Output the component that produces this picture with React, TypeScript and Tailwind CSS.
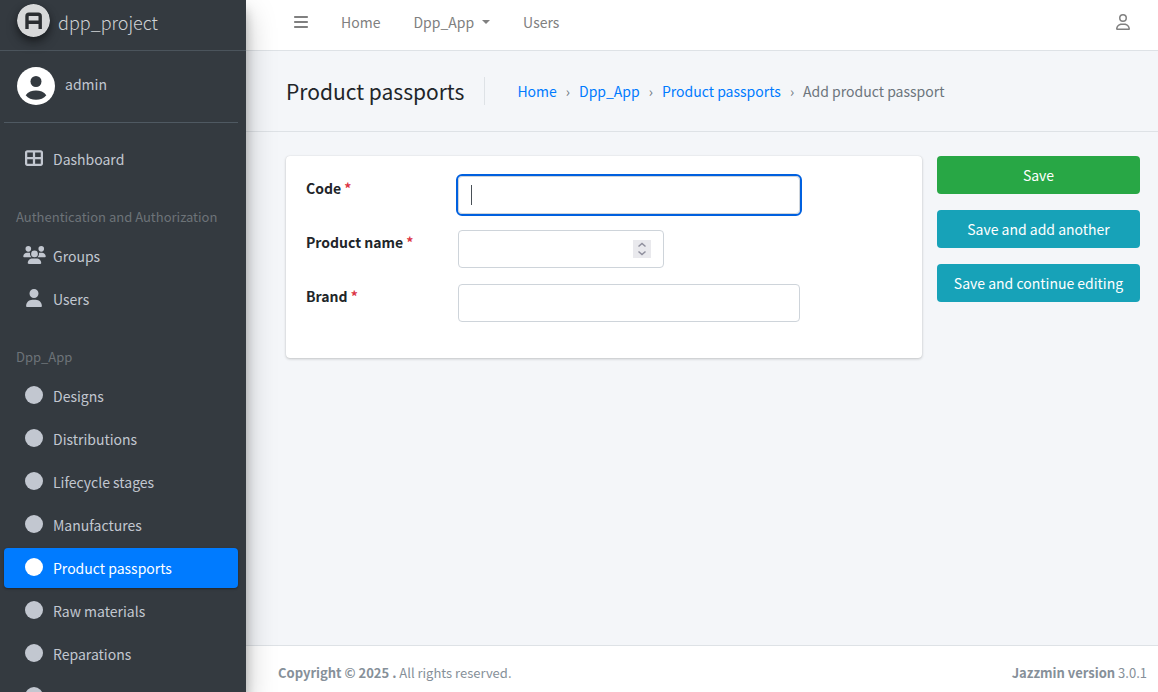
import type { ReactNode } from "react";
import { FaBars, FaCircle, FaRegUser, FaTableCellsLarge, FaUser, FaUsers } from "react-icons/fa6";

type NavItemProps = { label?: string; icon?: ReactNode; active?: boolean };

function NavItem({ label, icon, active }: NavItemProps) {
  return (
    <li>
      <a
        href="#"
        aria-label={label ?? "More"}
        aria-current={active ? "page" : undefined}
        className={
          active
            ? "flex h-10 items-center rounded bg-[#007bff] pl-4 text-white shadow-[0_1px_3px_rgba(0,0,0,0.12),0_1px_2px_rgba(0,0,0,0.24)]"
            : "flex h-10 items-center rounded pl-4 text-[#c2c7d0]"
        }
      >
        <span className="mr-[5px] flex w-7 justify-center pb-[2px] text-[18px]">{icon ?? <FaCircle />}</span>
        <span>{label}</span>
      </a>
    </li>
  );
}

function NavHeader({ children }: { children: ReactNode }) {
  return <h2 className="px-3 pt-[26px] pb-[3px] text-[13px] leading-6 text-[#6d7378]">{children}</h2>;
}

function Logo() {
  return (
    <svg viewBox="0 0 33 33" className="size-[33px] rounded-full shadow-[0_3px_6px_rgba(0,0,0,0.3),0_6px_12px_rgba(0,0,0,0.3)]" aria-hidden="true">
      <circle cx="16.5" cy="16.5" r="16.5" fill="#d7d8d9" />
      <path d="M10 25V12.2Q10 10.2 12 10.2H21.2Q23.2 10.2 23.2 12.2V25M10 18.2H23.2" fill="none" stroke="#2b2e31" strokeWidth="3.4" />
    </svg>
  );
}

function Avatar() {
  return (
    <svg viewBox="0 0 38 38" className="size-[38px]" aria-hidden="true">
      <circle cx="19" cy="19" r="19" fill="#fff" />
      <circle cx="19" cy="14.5" r="5.5" fill="#343a40" />
      <path d="M8.700 28.300C11 25 15 23.600 19 23.600S27 25 29.300 28.300C27 31.300 23 32.800 19 32.800S11 31.300 8.700 28.300Z" fill="#343a40" />
    </svg>
  );
}

function Sidebar() {
  return (
    <aside className="sticky top-0 z-10 h-screen w-[246px] shrink-0 overflow-hidden bg-[#343a40] shadow-[0_14px_28px_rgba(0,0,0,0.25),0_10px_10px_rgba(0,0,0,0.22)]">
      <a href="#" className="flex h-[51px] items-start gap-2 border-b border-[#4b545c] pt-1 pl-[17px] text-[#cfd2d5]">
        <Logo />
        <span className="pt-[3px] text-[18px] leading-[30px] font-light">dpp_project</span>
      </a>
      <div className="px-1 pr-2">
        <div className="flex h-[72px] items-center gap-[10px] border-b border-[#4f5962] pb-[2px] pl-[13px]">
          <Avatar />
          <a href="#" className="pb-1 text-[#c2c7d0]">admin</a>
        </div>
        <nav className="pt-4">
          <ul className="flex flex-col gap-[3px]">
            <NavItem label="Dashboard" icon={<FaTableCellsLarge />} />
          </ul>
          <NavHeader>Authentication and Authorization</NavHeader>
          <ul className="flex flex-col gap-[3px] pt-1">
            <NavItem label="Groups" icon={<FaUsers className="w-[23px]" />} />
            <NavItem label="Users" icon={<FaUser />} />
          </ul>
          <NavHeader>Dpp_App</NavHeader>
          <ul className="flex flex-col gap-[3px] pt-1">
            <NavItem label="Designs" />
            <NavItem label="Distributions" />
            <NavItem label="Lifecycle stages" />
            <NavItem label="Manufactures" />
            <NavItem label="Product passports" active />
            <NavItem label="Raw materials" />
            <NavItem label="Reparations" />
            <NavItem />
          </ul>
        </nav>
      </div>
    </aside>
  );
}

function Topbar() {
  return (
    <header className="flex h-[51px] items-center justify-between border-b border-[#dee2e6] bg-white pr-7 pb-[6px] pl-12 text-[#808080]">
      <nav className="flex items-center gap-[33px]">
        <button type="button" aria-label="Toggle sidebar"><FaBars className="h-4 w-[14px]" /></button>
        <a href="#">Home</a>
        <a href="#" className="flex items-center gap-2">
          Dpp_App
          <svg viewBox="0 0 8 4" className="h-1 w-2" aria-hidden="true"><path d="M0 0H8L4 4Z" fill="currentColor" /></svg>
        </a>
        <a href="#">Users</a>
      </nav>
      <button type="button" aria-label="Account"><FaRegUser className="h-4 w-[14px]" /></button>
    </header>
  );
}

function Row({ id, label, children }: { id: string; label: string; children: ReactNode }) {
  return (
    <div className="flex h-[54px] items-start">
      <label htmlFor={id} className="w-[152px] shrink-0 leading-6 font-bold text-[#212529]">
        {label} <span className="text-[#dc3545]">*</span>
      </label>
      {children}
    </div>
  );
}

const field = "h-[38px] w-full rounded border border-[#ced4da] bg-white px-3 text-[#495057]";

function PassportForm() {
  return (
    <form className="flex items-start gap-[15px] pt-6 pr-[18px] pl-10" onSubmit={(e) => e.preventDefault()}>
      <div className="h-[202px] min-w-0 flex-1 rounded bg-white p-5 shadow-[0_0_1px_rgba(0,0,0,0.125),0_1px_3px_rgba(0,0,0,0.2)]">
        <Row id="code" label="Code">
          <div className="relative w-[342px]">
            <input id="code" type="text" className={`${field} outline-2 outline-[#0060df] caret-transparent`} />
            <span className="absolute top-[9px] left-[13px] h-5 w-px bg-[#495057]" />
          </div>
        </Row>
        <Row id="name" label="Product name">
          <div className="relative w-[206px]">
            <input id="name" type="number" className={`${field} [appearance:textfield]`} />
            <svg viewBox="0 0 18 18" className="absolute top-[10px] right-[13px] size-[18px]" aria-hidden="true">
              <path d="M0 0H18V18H0Z" fill="#e9e9ed" />
              <path d="M5.500 6.500L9 3.500L12.500 6.500M5.500 11.500L9 14.500L12.500 11.500" fill="none" stroke="#8f8f9d" strokeWidth="1.500" />
            </svg>
          </div>
        </Row>
        <Row id="brand" label="Brand">
          <div className="w-[342px]"><input id="brand" type="text" className={field} /></div>
        </Row>
      </div>
      <div className="flex w-[203px] shrink-0 flex-col gap-4 text-white">
        <button type="submit" className="h-[38px] rounded bg-[#28a745]">Save</button>
        <button type="submit" className="h-[38px] rounded bg-[#17a2b8]">Save and add another</button>
        <button type="submit" className="h-[38px] rounded bg-[#17a2b8]">Save and continue editing</button>
      </div>
    </form>
  );
}

export default function App() {
  return (
    <div className="flex min-h-screen bg-[#f4f6f9] font-['Noto_Sans_CJK_SC',sans-serif] text-[14px] leading-6">
      <Sidebar />
      <div className="flex min-w-0 flex-1 flex-col">
        <Topbar />
        <main className="flex-1">
          <div className="flex h-[81px] items-center border-b border-[#dee2e6] pl-10">
            <h1 className="border-r border-[#dee2e6] pr-5 text-[21px] leading-7 text-[#212529]">Product passports</h1>
            <nav aria-label="Breadcrumb">
              <ol className="flex pl-8 text-[#007bff]">
                <li><a href="#">Home</a></li>
                <li className="px-[9px] text-[#6c757d]">›</li>
                <li><a href="#">Dpp_App</a></li>
                <li className="px-[9px] text-[#6c757d]">›</li>
                <li><a href="#">Product passports</a></li>
                <li className="px-[9px] text-[#6c757d]">›</li>
                <li className="text-[#6c757d]">Add product passport</li>
              </ol>
            </nav>
          </div>
          <PassportForm />
        </main>
        <footer className="flex h-[47px] items-center justify-between border-t border-[#dee2e6] bg-white pt-2 pr-[11px] pl-8 text-[13px] text-[#869099]">
          <p><strong>Copyright © 2025 .</strong> All rights reserved.</p>
          <p><strong>Jazzmin version</strong> 3.0.1</p>
        </footer>
      </div>
    </div>
  );
}
